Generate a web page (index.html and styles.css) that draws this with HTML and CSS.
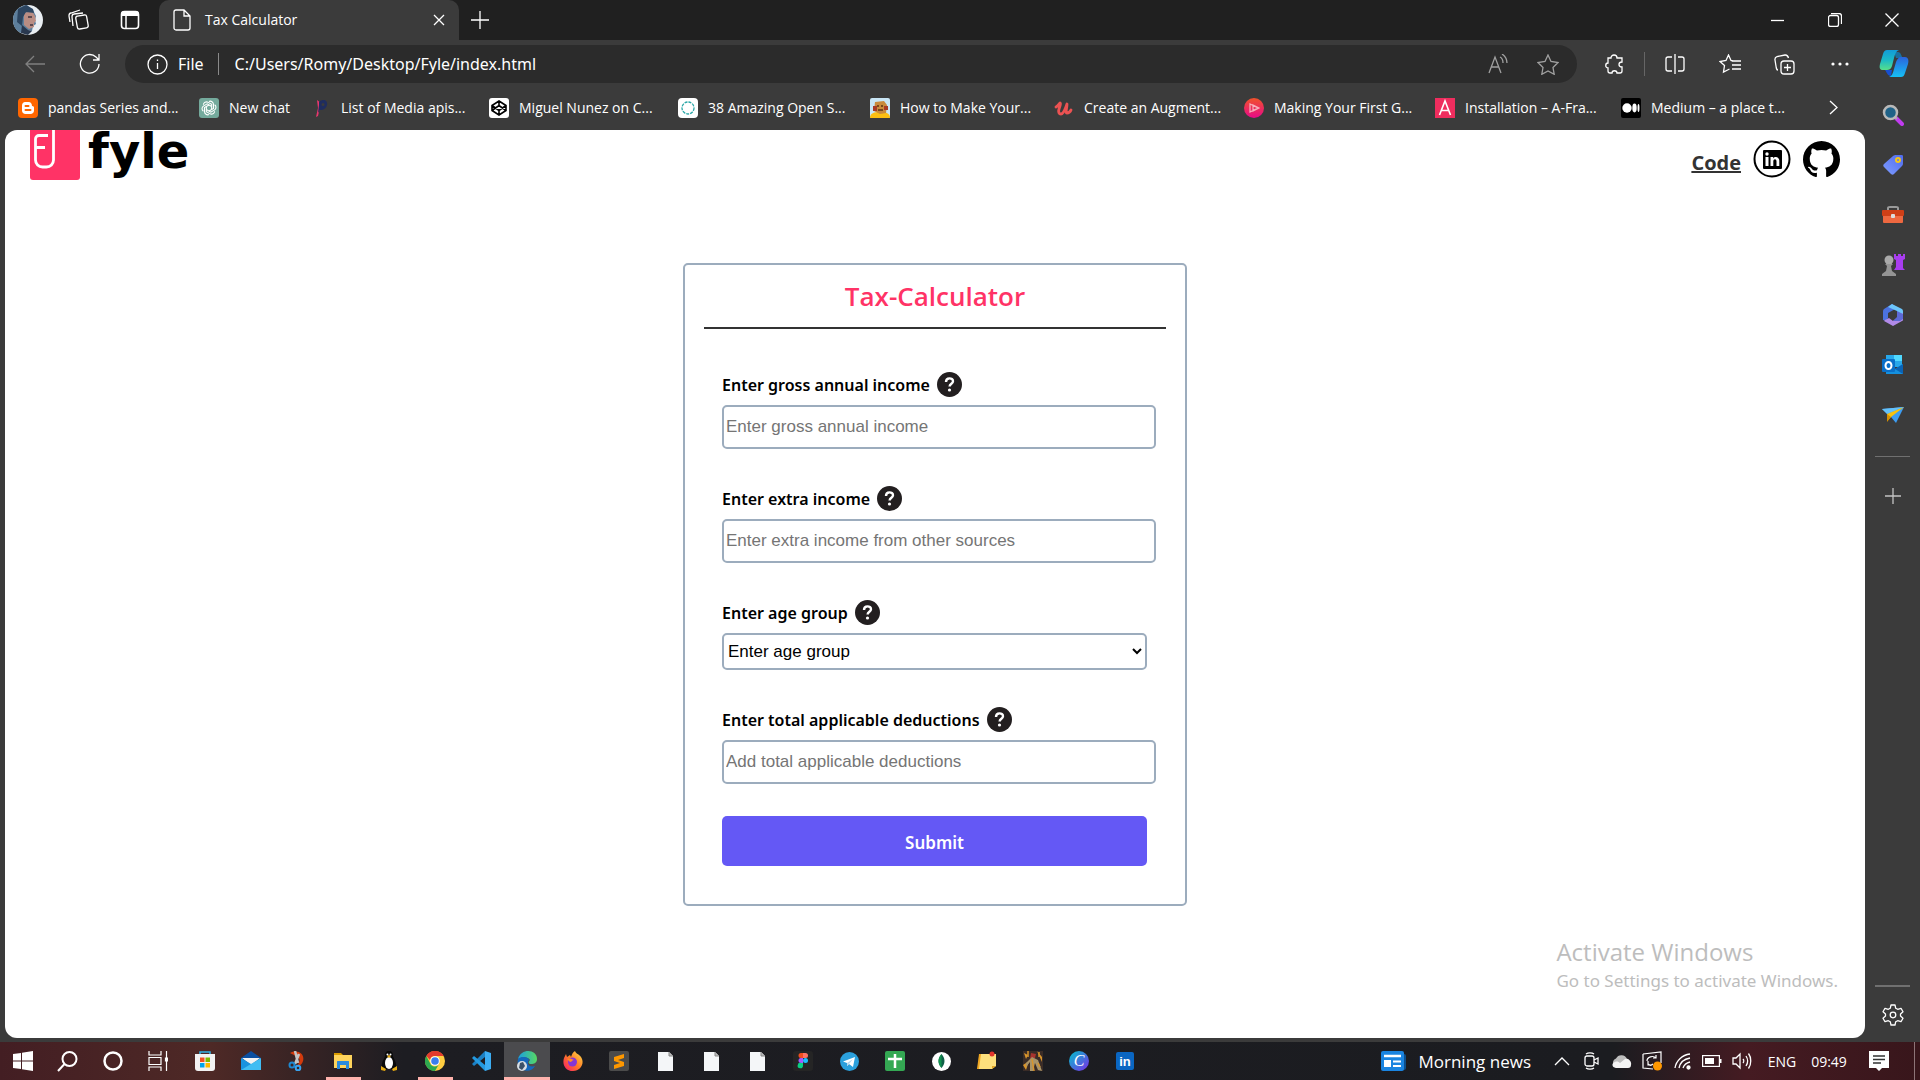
FILE: index.html
```html
<!DOCTYPE html>
<html lang="en">
<head>
<meta charset="utf-8">
<title>Tax Calculator</title>
<link rel="stylesheet" href="styles.css">
</head>
<body>
<header class="tabbar">
  <div class="tabbar-tools">
    <button class="tool" aria-label="Profile"><svg width="30" height="30" viewBox="0 0 30 30"><circle cx="15" cy="15" r="15" fill="#e9eef2"/><path d="M14 0C5 1 0 7 0 15c0 6 3 11 8 13l5-3 6 1 1-5 3-2-1-4 1-4-3-6z" fill="#5d7f9c"/><path d="M11 8l8-2 3 5 1 5-2 2v4l-5 2-5-4z" fill="#b98d83"/><path d="M5 4l8-4 7 4 1 4-8-1-3 5-1 9-5-4z" fill="#2c4560"/><path d="M9 20l6 5 4 1-4 4-7-2z" fill="#29384f"/><path d="M15 12h4M17 20h3" stroke="#3f3440" stroke-width="1.5"/></svg></button>
    <button class="tool" aria-label="Workspaces"><svg class="line" width="22" height="22" viewBox="0 0 22 22"><rect x="8.500" y="6.500" width="11" height="13" rx="2" transform="rotate(-10 14 13)"/><path d="M5 17l-1-9c0-2 1-3 2-3l9-1M2 13l-1-6c0-2 1-3 2-3l9-3"/></svg></button>
    <button class="tool" aria-label="Tab actions"><svg width="20" height="20" viewBox="0 0 20 20"><rect x="1.500" y="1.500" width="17" height="17" rx="3" fill="none" stroke="#fff" stroke-width="1.600"/><path d="M1 6V4a3 3 0 013-3h12a3 3 0 013 3v2z" fill="#fff"/><path d="M6 6v12" stroke="#fff" stroke-width="1.500"/></svg></button>
  </div>
  <div class="tab">
    <svg class="line" width="18" height="22" viewBox="0 0 18 22"><path d="M3 1h8l6 6v12a2 2 0 01-2 2H3a2 2 0 01-2-2V3a2 2 0 012-2zM11 1v6h6"/></svg>
    <span class="tab-title">Tax Calculator</span>
    <button class="tab-close" aria-label="Close tab"><svg class="line" width="12" height="12" viewBox="0 0 12 12"><path d="M1 1l10 10M11 1L1 11"/></svg></button>
  </div>
  <button class="new-tab" aria-label="New tab"><svg class="line" width="18" height="18" viewBox="0 0 18 18"><path d="M9 0v18M0 9h18"/></svg></button>
  <div class="window-buttons">
    <button aria-label="Minimize"><svg class="line" width="13" height="13" viewBox="0 0 13 13"><path d="M0 6.500h13"/></svg></button>
    <button aria-label="Restore"><svg class="line" width="14" height="14" viewBox="0 0 14 14"><rect x=".5" y="2.500" width="10" height="11" rx="2"/><path d="M3 .5h8a2.500 2.500 0 012.500 2.500v8"/></svg></button>
    <button aria-label="Close"><svg class="line" width="14" height="14" viewBox="0 0 14 14"><path d="M.5.5l13 13M13.500.5l-13 13"/></svg></button>
  </div>
</header>

<nav class="toolbar">
  <button class="nav-button" aria-label="Back"><svg class="line dim" width="20" height="18" viewBox="0 0 20 18"><path d="M20 9H1M9 1L1 9l8 8"/></svg></button>
  <button class="nav-button" aria-label="Refresh"><svg class="line" width="22" height="22" viewBox="0 0 22 22"><path d="M20 11a9.300 9.300 0 11-3-7l3 3M20 1v6h-6"/></svg></button>
  <div class="address">
    <svg class="line" width="21" height="21" viewBox="0 0 21 21"><circle cx="10.500" cy="10.500" r="9.500"/><path d="M10.500 9v6M10.500 5.500v1.500"/></svg>
    <span class="scheme">File</span>
    <input class="url" type="text" aria-label="Address" value="C:/Users/Romy/Desktop/Fyle/index.html">
    <button class="address-button" aria-label="Read aloud"><svg class="line dim2" width="20" height="20" viewBox="0 0 20 20"><path d="M1 19L7 3l6 16M3 13h8M12 3c2 1 3 3 3 6M14 0c3 2 5 5 5 9"/></svg></button>
    <button class="address-button" aria-label="Add to favorites"><svg class="line dim2" width="22" height="21" viewBox="0 0 22 21"><path d="M11 1l3 6.500 7 1-5 5 1.200 6.800L11 17l-6.200 3.300L6 13.500l-5-5 7-1z"/></svg></button>
  </div>
  <div class="toolbar-end">
    <button class="nav-button" aria-label="Extensions"><svg class="line" width="20" height="20" viewBox="0 0 20 20"><path d="M3 4h3c0-4 6-4 6 0h5v4c-4 0-4 5 0 5v4c0 1-1 2-2 2H12c0-3-5-3-5 0H5c-1 0-2-1-2-2v-3c-3 0-3-5 0-5z"/></svg></button>
    <span class="separator"></span>
    <button class="nav-button" aria-label="Split screen"><svg class="line" width="20" height="20" viewBox="0 0 20 20"><path d="M10 0v20M7 3H3a2 2 0 00-2 2v10a2 2 0 002 2h4M13 3h4a2 2 0 012 2v10a2 2 0 01-2 2h-4"/></svg></button>
    <button class="nav-button" aria-label="Favorites"><svg class="line" width="22" height="20" viewBox="0 0 22 20"><path d="M14 7l-2-.5L9.500 1 7 6.500l-6 1 4.500 4L4.500 18l6-3M13 11h9M13 7h9M13 15h9"/></svg></button>
    <button class="nav-button" aria-label="Collections"><svg class="line" width="21" height="21" viewBox="0 0 21 21"><rect x="7" y="7" width="13" height="13" rx="3"/><path d="M13.500 10v7M10 13.500h7M4 16c-1 0-1.500-1-1.700-2L1 6c-.3-2 .5-3 2-3.400L11 1c2-.2 3 .8 3.500 3"/></svg></button>
    <button class="nav-button" aria-label="Settings and more"><svg width="18" height="4" viewBox="0 0 18 4" fill="#fff"><circle cx="2" cy="2" r="1.600"/><circle cx="9" cy="2" r="1.600"/><circle cx="16" cy="2" r="1.600"/></svg></button>
    <button class="copilot" aria-label="Copilot"><svg width="30" height="28" viewBox="0 0 30 28"><defs><linearGradient id="cp1" x1="0" y1="0" x2="0" y2="1"><stop offset="0" stop-color="#129bd8"/><stop offset=".5" stop-color="#1bb9c6"/><stop offset="1" stop-color="#57e08a"/></linearGradient><linearGradient id="cp2" x1="0" y1="0" x2="0" y2="1"><stop offset="0" stop-color="#2b63dc"/><stop offset="1" stop-color="#16c0f5"/></linearGradient></defs><path d="M15 2h4c3 0 3 4 5 6h-7z" fill="#1a6f9f"/><path d="M6 20h7l-1 6c-3 0-4-3-6-6z" fill="#174fd0"/><path d="M8 0h12c-3 1-4 4-5 8l-2 8c-1 3-3 4-5 4H4c-3 0-4-2-3-6L4 4c1-3 2-4 4-4z" fill="url(#cp1)"/><path d="M22 27H10c3-1 4-4 5-8l2-7c1-3 3-5 5-5h4c3 0 4 3 3 7l-3 9c-1 3-2 4-4 4z" fill="url(#cp2)"/></svg></button>
  </div>
</nav>

<div class="browser">
  <div class="content">
    <nav class="bookmarks">
      <a href="#"><svg width="20" height="20" viewBox="0 0 20 20"><rect width="20" height="20" rx="4" fill="#f60"/><path d="M7 4h3.500C13 4 14 6 14 8c2 0 2 1 2 2v2.500c0 2-1.500 3.500-3.500 3.500h-5C5.500 16 4 14.500 4 12.500v-5C4 5.500 5.500 4 7 4z" fill="#fff"/><path d="M7.500 8h3M7.500 12h5" stroke="#f60" stroke-width="2" stroke-linecap="round"/></svg><span>pandas Series and...</span></a>
      <a href="#"><svg width="20" height="20" viewBox="0 0 20 20"><rect width="20" height="20" rx="3" fill="#74aa9c"/><g fill="none" stroke="#fff" stroke-width="1.100"><g id="petal"><path d="M10 3.500c2-1 4.500.5 4.500 3v4L10 13"/></g><use href="#petal" transform="rotate(60 10 10)"/><use href="#petal" transform="rotate(120 10 10)"/><use href="#petal" transform="rotate(180 10 10)"/><use href="#petal" transform="rotate(240 10 10)"/><use href="#petal" transform="rotate(300 10 10)"/></g></svg><span>New chat</span></a>
      <a href="#"><svg width="20" height="20" viewBox="0 0 20 20"><path d="M6 2l4 3-3 13-2 1 2-9z" fill="#e8376d"/><path d="M8 4c5-4 9-1 8 3s-4 5-7 5l-2 3 1-8z" fill="#1f2d5f"/><circle cx="12" cy="6.500" r="1.500" fill="#3b3b3b"/></svg><span>List of Media apis...</span></a>
      <a href="#"><svg width="20" height="20" viewBox="0 0 20 20"><rect width="20" height="20" rx="3" fill="#fff"/><path d="M10 3l7 4.500v5L10 17l-7-4.500v-5zM10 3v4.500M10 12.500V17M3 7.500l7 5 7-5M3 12.500l7-5 7 5" fill="none" stroke="#000" stroke-width="1.600"/></svg><span>Miguel Nunez on C...</span></a>
      <a href="#"><svg width="20" height="20" viewBox="0 0 20 20"><rect width="20" height="20" rx="4" fill="#fff"/><circle cx="10" cy="10" r="6" fill="none" stroke="#2ba8a8" stroke-width="1.300" stroke-dasharray="3 1"/></svg><span>38 Amazing Open S...</span></a>
      <a href="#"><svg width="20" height="20" viewBox="0 0 20 20"><rect width="20" height="20" rx="2" fill="#c9e6f5"/><path d="M0 20c0-5 4-6 10-6s10 1 10 6z" fill="#fcbf12"/><path d="M5 4l9-1 3 4-1 8-6 1-6-3z" fill="#c98a3c"/><path d="M3 8h4v5H3zM14 8h4v4h-4z" fill="#a83a25"/><path d="M7 8h2M11 8h2M8 12h5" stroke="#5c3515" stroke-width="1.500"/></svg><span>How to Make Your...</span></a>
      <a href="#"><svg width="20" height="20" viewBox="0 0 20 20"><path d="M2 9c2-1 3-3 4-4 1 0 0 3-1 6s0 5 2 5 4-4 6-10c0 4-2 9 0 9 1 0 3-1 4-3" fill="none" stroke="#ec5252" stroke-width="2.800" stroke-linecap="round" stroke-linejoin="round"/></svg><span>Create an Augment...</span></a>
      <a href="#"><svg width="20" height="20" viewBox="0 0 20 20"><defs><linearGradient id="ps" x1="0" y1="0" x2="0" y2="1"><stop offset="0" stop-color="#f0522a"/><stop offset="1" stop-color="#e80a89"/></linearGradient></defs><circle cx="10" cy="10" r="10" fill="url(#ps)"/><path d="M6 6v8l8-4zM9 7v6l6-3z" fill="none" stroke="#f7b0bb" stroke-width="1.200"/></svg><span>Making Your First G...</span></a>
      <a href="#"><svg width="20" height="20" viewBox="0 0 20 20"><rect width="20" height="20" fill="#ef2d5e"/><path d="M4.500 17L10 3l5.500 14M6.500 12.500h7" fill="none" stroke="#fff" stroke-width="1.600"/></svg><span>Installation – A-Fra...</span></a>
      <a href="#"><svg width="20" height="20" viewBox="0 0 20 20"><rect width="20" height="20" rx="2" fill="#000"/><circle cx="6" cy="10" r="4.700" fill="#fff"/><ellipse cx="13.500" cy="10" rx="2.200" ry="4.400" fill="#fff"/><ellipse cx="17.500" cy="10" rx="1" ry="4" fill="#fff"/></svg><span>Medium – a place t...</span></a>
      <button class="more-bookmarks" aria-label="More bookmarks"><svg class="line" width="9" height="15" viewBox="0 0 9 15"><path d="M1 1l7 6.500L1 14"/></svg></button>
    </nav>

    <div class="page">
      <header class="site-header">
        <a class="brand" href="#">
          <svg width="50" height="50" viewBox="0 0 50 50"><path d="M0 0h50v47a3 3 0 01-3 3H3a3 3 0 01-3-3z" fill="#ff3366"/><path d="M18 5.500H9a3.500 3.500 0 00-3.500 3.500v21a7 7 0 007 7h4a7 7 0 007-7V0M6 17.500h9" fill="none" stroke="#fff" stroke-width="2.800"/></svg>
          <span class="wordmark">fyle</span>
        </a>
        <div class="links">
          <a class="code-link" href="#">Code</a>
          <a href="#" aria-label="LinkedIn"><svg width="38" height="38" viewBox="0 0 38 38"><circle cx="19" cy="19" r="17.500" fill="#fff" stroke="#000" stroke-width="2"/><rect x="10" y="10" width="19" height="19" rx="1" fill="#000"/><g fill="#fff"><rect x="12.500" y="17" width="3" height="9"/><circle cx="14" cy="14" r="1.700"/><path d="M17.500 17h2.700v1.400c1.400-2.400 6.100-2 6.100 2.400V26h-2.800v-4.500c0-3-3.200-2.700-3.200 0V26h-2.800z"/></g></svg></a>
          <a href="#" aria-label="GitHub"><svg width="37" height="37" viewBox="0 0 16 16"><path d="M8 0C3.580 0 0 3.580 0 8c0 3.540 2.290 6.530 5.470 7.590.4.070.55-.17.55-.38 0-.19-.01-.82-.01-1.490-2.010.37-2.530-.49-2.690-.94-.09-.23-.48-.94-.82-1.130-.28-.15-.68-.52-.01-.53.63-.01 1.080.58 1.230.82.72 1.210 1.870.87 2.330.66.07-.52.28-.87.51-1.070-1.780-.2-3.640-.89-3.640-3.950 0-.87.31-1.590.82-2.150-.08-.2-.36-1.020.08-2.120 0 0 .67-.21 2.200.82.64-.18 1.320-.27 2-.27s1.360.09 2 .27c1.530-1.040 2.200-.82 2.200-.82.44 1.100.16 1.920.08 2.120.51.56.82 1.270.82 2.150 0 3.070-1.870 3.750-3.650 3.950.29.25.54.73.54 1.480 0 1.070-.01 1.930-.01 2.200 0 .21.15.46.55.38A8.010 8.010 0 0016 8c0-4.420-3.580-8-8-8z"/></svg></a>
        </div>
      </header>

      <main class="card">
        <h1 class="card-title">Tax-Calculator</h1>
        <form class="form">
          <div class="field">
            <div class="label-row"><label for="gross">Enter gross annual income</label><button class="help" type="button" aria-label="Help"><svg width="25" height="25" viewBox="0 0 25 25"><circle cx="12.500" cy="12.500" r="12.500" fill="#231f20"/><path d="M9 10c0-5 7-4.500 7-.8 0 2.600-3.400 2.500-3.400 5.300" fill="none" stroke="#fff" stroke-width="2.400"/><circle cx="12.500" cy="18" r="1.600" fill="#fff"/></svg></button></div>
            <input class="text-input" id="gross" type="text" placeholder="Enter gross annual income">
          </div>
          <div class="field">
            <div class="label-row"><label for="extra">Enter extra income</label><button class="help" type="button" aria-label="Help"><svg width="25" height="25" viewBox="0 0 25 25"><circle cx="12.500" cy="12.500" r="12.500" fill="#231f20"/><path d="M9 10c0-5 7-4.500 7-.8 0 2.600-3.400 2.500-3.400 5.300" fill="none" stroke="#fff" stroke-width="2.400"/><circle cx="12.500" cy="18" r="1.600" fill="#fff"/></svg></button></div>
            <input class="text-input" id="extra" type="text" placeholder="Enter extra income from other sources">
          </div>
          <div class="field">
            <div class="label-row"><label for="age">Enter age group</label><button class="help" type="button" aria-label="Help"><svg width="25" height="25" viewBox="0 0 25 25"><circle cx="12.500" cy="12.500" r="12.500" fill="#231f20"/><path d="M9 10c0-5 7-4.500 7-.8 0 2.600-3.400 2.500-3.400 5.300" fill="none" stroke="#fff" stroke-width="2.400"/><circle cx="12.500" cy="18" r="1.600" fill="#fff"/></svg></button></div>
            <select class="select" id="age"><option>Enter age group</option></select>
          </div>
          <div class="field">
            <div class="label-row"><label for="deductions">Enter total applicable deductions</label><button class="help" type="button" aria-label="Help"><svg width="25" height="25" viewBox="0 0 25 25"><circle cx="12.500" cy="12.500" r="12.500" fill="#231f20"/><path d="M9 10c0-5 7-4.500 7-.8 0 2.600-3.400 2.500-3.400 5.300" fill="none" stroke="#fff" stroke-width="2.400"/><circle cx="12.500" cy="18" r="1.600" fill="#fff"/></svg></button></div>
            <input class="text-input" id="deductions" type="text" placeholder="Add total applicable deductions">
          </div>
          <button class="submit" type="submit">Submit</button>
        </form>
      </main>

      <div class="watermark">
        <p class="watermark-title">Activate Windows</p>
        <p class="watermark-text">Go to Settings to activate Windows.</p>
      </div>
    </div>
  </div>

  <aside class="sidebar">
    <button aria-label="Search"><svg width="22" height="22" viewBox="0 0 22 22"><path d="M14 14l6 6" stroke="#c13cf0" stroke-width="4" stroke-linecap="round"/><path d="M12 12l3 3" stroke="#aaa" stroke-width="2"/><circle cx="8.500" cy="8.500" r="6.500" fill="#1f6288" stroke="#b9b9b9" stroke-width="2.500"/></svg></button>
    <button aria-label="Shopping"><svg width="22" height="22" viewBox="0 0 22 22"><defs><linearGradient id="tg" x1="1" y1="0" x2="0" y2="1"><stop offset="0" stop-color="#4f6bed"/><stop offset="1" stop-color="#7f9dff"/></linearGradient></defs><path d="M11 2c1-1 2-1 3-1h6c1 0 1 1 1 2v6c0 1 0 2-1 3l-8 8c-1 1-2 1-3 0l-7-7c-1-1-1-2 0-3z" fill="url(#tg)"/><circle cx="16" cy="6" r="2" fill="none" stroke="#f5c518" stroke-width="2"/></svg></button>
    <button aria-label="Tools"><svg width="24" height="20" viewBox="0 0 24 20"><path d="M7 5V3c0-1 1-1 2-1h6c1 0 2 0 2 1v2" fill="none" stroke="#9a9a9a" stroke-width="2"/><rect x="2" y="7" width="20" height="11" rx="1" fill="#ee6840"/><rect x="1" y="5" width="22" height="6" rx="1" fill="#cf3f17"/><rect x="10" y="9" width="4" height="4" rx="1" fill="#ddd"/></svg></button>
    <button aria-label="Games"><svg width="24" height="24" viewBox="0 0 24 24"><path d="M13 1h2v2h2V1h3v2h2V1h2v5l-2 1v8l2 2H13l2-3V7l-2-1z" fill="#a93df0"/><circle cx="8" cy="7" r="4.500" fill="#aaa"/><path d="M4 11h8l-2 2 1 5 4 3v2H1v-2l4-3 1-5z" fill="#949494"/></svg></button>
    <button aria-label="Microsoft 365"><svg width="22" height="22" viewBox="0 0 22 22"><path d="M10 0L2 5C1 6 1 7 1 8v8c2 1 4 0 5-2V9l9-5z" fill="#4b72df"/><path d="M10 0l10 5c1 1 1 2 1 3v6l-6-3V7L6 3z" fill="#6cc5fa"/><path d="M21 9v6c0 1 0 2-1 2l-9 5-9-5 1-1 4-2 4 3z" fill="#b18ae8"/><path d="M15 7l6 3v5l-3 2-7 0 4-4z" fill="#5d69d6"/></svg></button>
    <button aria-label="Outlook"><svg width="22" height="22" viewBox="0 0 22 22"><rect x="4" y="1" width="16" height="12" fill="#28a8ea"/><path d="M12 1h8v6h-8z" fill="#50d9ff"/><path d="M4 10l9 5 8-5v10H4z" fill="#1490df"/><path d="M21 10v10l-8-5z" fill="#0a63b5"/><rect y="5" width="13" height="13" rx="1" fill="#0a6fc8"/><ellipse cx="6.500" cy="11.500" rx="3" ry="3.500" fill="none" stroke="#fff" stroke-width="2"/></svg></button>
    <button aria-label="Drop"><svg width="24" height="18" viewBox="0 0 24 18"><path d="M1 3l22-2-8 16-5-6z" fill="#3d9df2"/><path d="M23 1L6 8l-5-5z" fill="#64c1fa"/><path d="M23 1L6 8v7l4-4z" fill="#f8c20e"/><path d="M10 11l-4 5V8z" fill="#d48e00"/></svg></button>
    <span class="side-rule"></span>
    <button aria-label="Customize"><svg class="line dim3" width="16" height="16" viewBox="0 0 16 16"><path d="M8 0v16M0 8h16"/></svg></button>
    <span class="side-rule side-rule-end"></span>
    <button aria-label="Settings"><svg class="line" width="22" height="22" viewBox="0 0 22 22"><circle cx="11" cy="11" r="2.800"/><path d="M9 1h4l.7 3.200 2 1.100L19 4.300l2 3.500L18.500 10v2L21 14.200l-2 3.500-3.300-1-2 1.100L13 21H9l-.7-3.200-2-1.100-3.300 1-2-3.500L3.500 12v-2L1 7.800l2-3.500 3.300 1 2-1.100z" stroke-linejoin="round"/></svg></button>
  </aside>
</div>

<footer class="taskbar">
  <div class="system">
    <button aria-label="Start"><svg width="20" height="20" viewBox="0 0 20 20" fill="#fff"><path d="M0 3l8-1v7.500H0zM9 1.800L20 0v9.500H9zM0 10.500h8V18l-8-1zM9 10.500h11V20L9 18.200z"/></svg></button>
    <button aria-label="Search"><svg width="21" height="21" viewBox="0 0 21 21" fill="none" stroke="#fff" stroke-width="2"><circle cx="12.500" cy="8" r="7"/><path d="M7.500 13L1 20"/></svg></button>
    <button aria-label="Cortana"><svg width="20" height="20" viewBox="0 0 20 20"><circle cx="10" cy="10" r="8.500" fill="none" stroke="#fff" stroke-width="2.500"/></svg></button>
    <button aria-label="Task view"><svg width="20" height="20" viewBox="0 0 20 20" fill="none" stroke="#fff" stroke-width="1.200"><path d="M1 0v4h12V0M1 20v-4h12v4M1 6.500h12v7H1zM18.500 0v20"/><path d="M17.500 7h2v3h-2z" fill="#fff"/></svg></button>
  </div>
  <div class="apps">
    <button aria-label="Store"><svg width="20" height="20" viewBox="0 0 20 20"><path d="M5 4V1h10v3" fill="none" stroke="#31b2e8" stroke-width="1.500"/><path d="M0 3h20v14c0 2-1 3-3 3H3c-2 0-3-1-3-3z" fill="#f2f2f2"/><path d="M5 6.500h4.500V11H5z" fill="#f25022"/><path d="M10.500 6.500H15V11h-4.500z" fill="#7fba00"/><path d="M5 12h4.500v4.500H5z" fill="#00a4ef"/><path d="M10.500 12H15v4.500h-4.500z" fill="#ffb900"/></svg></button>
    <button aria-label="Mail"><svg width="20" height="20" viewBox="0 0 20 20"><path d="M0 7l10-7 10 7v3H0z" fill="#0b4fa0"/><path d="M1 7h18l-9 7z" fill="#f3f3f3"/><path d="M0 7l20 12H0z" fill="#1a93e0"/><path d="M20 7v12H0z" fill="#41bdf3"/></svg></button>
    <button aria-label="Snip"><svg width="20" height="20" viewBox="0 0 20 20"><path d="M3 2c8-4 15 1 13 8-1 4-4 5-6 5 3-4 4-8-1-10z" fill="#d33a0c"/><path d="M8 0l3 12M12 3L8 13" stroke="#c4c4c4" stroke-width="2.500"/><circle cx="5" cy="14" r="2.500" fill="none" stroke="#1e88d0" stroke-width="2"/><circle cx="11" cy="17" r="2.300" fill="none" stroke="#39a2ee" stroke-width="2"/></svg></button>
    <button class="running" aria-label="File Explorer"><svg width="20" height="20" viewBox="0 0 20 20"><path d="M1 2h7l2 2v3H1z" fill="#d99b00"/><path d="M1 4h18v13H1z" fill="#ffd45c"/><path d="M4 18v-7c0-1 0-1 1-1h10c1 0 1 0 1 1v7h-3v-4H7v4z" fill="#2b8bdc"/></svg></button>
    <button aria-label="Linux"><svg width="18" height="20" viewBox="0 0 18 20"><path d="M9 0c3 0 4 2 4 5 0 2 4 6 3 11l-2 2H4l-2-2C1 11 5 7 5 5c0-3 1-5 4-5z" fill="#0a0a0a"/><ellipse cx="9" cy="12" rx="4" ry="6" fill="#fff"/><path d="M7 5l2-1 2 1-2 2zM1 15l5 3-1 2-4-1zM17 15l-5 3 1 2 4-1z" fill="#e7ac12"/><circle cx="7.500" cy="3.500" r="1" fill="#fff"/><circle cx="10.500" cy="3.500" r="1" fill="#fff"/></svg></button>
    <button class="running" aria-label="Chrome"><svg width="20" height="20" viewBox="0 0 20 20"><circle cx="10" cy="10" r="10" fill="#ffcd40"/><path d="M1.300 5A10 10 0 0118.700 5H10a5 5 0 00-5 4z" fill="#e33b2e"/><path d="M1.300 5A10 10 0 0010 20l4.300-7.500A5 5 0 015 12z" fill="#2da94f"/><circle cx="10" cy="10" r="4.800" fill="#fff"/><circle cx="10" cy="10" r="3.800" fill="#3b7ded"/></svg></button>
    <button aria-label="VS Code"><svg width="20" height="20" viewBox="0 0 20 20"><path d="M14 0l6 2v16l-6 2z" fill="#3cadf3"/><path d="M14 0v6L3 15l-2-2z" fill="#1b80c4"/><path d="M14 20v-6L3 5 1 7z" fill="#2399e0"/></svg></button>
    <button class="running active" aria-label="Edge"><svg width="21" height="20" viewBox="0 0 21 20"><defs><linearGradient id="eg"><stop offset="0" stop-color="#1a9fe0"/><stop offset="1" stop-color="#57d862"/></linearGradient></defs><path d="M1 8C4-3 20-2 20 8c0 4-3 5-6 5s-3-2-1-4c-1-3-8-4-12-1z" fill="url(#eg)"/><path d="M1 8c5-4 11-1 11 1-3 3 0 8 6 6-2 4-7 6-12 4S0 12 1 8z" fill="#1468bd"/><circle cx="5" cy="15" r="5" fill="#d7dde3"/><path d="M3 12l3-1 2 4-3 4-3-2z" fill="#3c5168"/></svg></button>
    <button aria-label="Firefox"><svg width="20" height="20" viewBox="0 0 20 20"><defs><linearGradient id="fx" x1="1" y1="0" x2="0" y2="1"><stop offset="0" stop-color="#ffe24b"/><stop offset=".5" stop-color="#ff7a26"/><stop offset="1" stop-color="#f5156c"/></linearGradient></defs><path d="M12 0c1 3 4 3 6 6 4 6 0 14-8 14S-1 13 1 7l2-4 1 3 3-2 1 2c1-3 2-5 4-6z" fill="url(#fx)"/><circle cx="9.500" cy="11" r="4.500" fill="#8436d6"/><path d="M4 8c3-1 5 0 7 1-2 0-2 2-4 2z" fill="#ff8a2a"/></svg></button>
    <button aria-label="Sublime Text"><svg width="20" height="20" viewBox="0 0 20 20"><rect width="20" height="20" rx="2" fill="#4b4b4b"/><path d="M15 3v4l-6 2 6 2v4l-10 3v-4l6-2-6-2V6z" fill="#ff9800"/></svg></button>
    <button aria-label="Document"><svg width="15" height="19" viewBox="0 0 15 19"><path d="M0 0h11l4 4v15H0z" fill="#f4f6f8"/><path d="M11 0v4h4" fill="#bcbcbc" stroke="#888"/></svg></button>
    <button aria-label="Document"><svg width="15" height="19" viewBox="0 0 15 19"><path d="M0 0h11l4 4v15H0z" fill="#f4f6f8"/><path d="M11 0v4h4" fill="#bcbcbc" stroke="#888"/></svg></button>
    <button aria-label="Document"><svg width="15" height="19" viewBox="0 0 15 19"><path d="M0 0h11l4 4v15H0z" fill="#f4f6f8"/><path d="M11 0v4h4" fill="#bcbcbc" stroke="#888"/></svg></button>
    <button aria-label="Figma"><svg width="20" height="20" viewBox="0 0 20 20"><rect width="20" height="20" rx="3" fill="#252525"/><path d="M10 2H8a2.500 2.500 0 000 5h2z" fill="#f24e1e"/><path d="M10 2h2.500a2.500 2.500 0 010 5H10z" fill="#ff7262"/><path d="M10 7H8a2.500 2.500 0 000 5h2z" fill="#a259ff"/><circle cx="12.500" cy="9.500" r="2.500" fill="#1abcfe"/><path d="M10 12H8a2.700 2.700 0 102 2.500z" fill="#0acf83"/></svg></button>
    <button aria-label="Telegram"><svg width="19" height="19" viewBox="0 0 19 19"><circle cx="9.500" cy="9.500" r="9.500" fill="#2ba0dc"/><path d="M3 9.500L15 5l-2 10-4-3-2 2v-3z" fill="#fff"/><path d="M7 11l6-4-4 5-2 2z" fill="#b9d8ee"/></svg></button>
    <button aria-label="Sheets"><svg width="20" height="20" viewBox="0 0 20 20"><rect width="20" height="20" rx="2" fill="#34a853"/><path d="M10 3v14M3 8h14" stroke="#fff" stroke-width="2.500"/></svg></button>
    <button aria-label="MongoDB"><svg width="19" height="19" viewBox="0 0 19 19"><circle cx="9.500" cy="9.500" r="9.500" fill="#fff"/><path d="M9.500 2c4 5 4 9 0 14-4-5-4-9 0-14z" fill="#116149"/><path d="M9.500 2v14c-4-5-4-9 0-14z" fill="#12924f"/></svg></button>
    <button aria-label="Sticky Notes"><svg width="20" height="20" viewBox="0 0 20 20"><path d="M2 3h6v15H0z" fill="#f0a722"/><path d="M4 3h15v12l-4 3H2z" fill="#fde07d"/><path d="M19 15l-4 3v-3z" fill="#e2a725"/><circle cx="15" cy="3" r="2.500" fill="#e1352c"/></svg></button>
    <button aria-label="Game"><svg width="20" height="20" viewBox="0 0 20 20"><path d="M0 0h20v20H0z" fill="#3a2c27"/><path d="M1 2l4 2-2 4zM14 0l5 6v5zM0 14l6-4-3 9z" fill="#d8952c"/><path d="M8 2l5 1-1 4-5 1z" fill="#a8342e"/><path d="M3 12l6-6 6 3 4 11-4-1-3-7-2 8H7V11l-4 5z" fill="#a99468"/><path d="M9 8l2 12M15 12l2 4M5 0v6M16 1v5" stroke="#d8952c" stroke-width="1.500"/></svg></button>
    <button aria-label="Canva"><svg width="20" height="20" viewBox="0 0 20 20"><defs><linearGradient id="cv" x1="0" y1="0" x2="1" y2="1"><stop offset="0" stop-color="#00c4cc"/><stop offset="1" stop-color="#7d2ae8"/></linearGradient></defs><circle cx="10" cy="10" r="10" fill="url(#cv)"/><text x="10" y="15" text-anchor="middle" font-family="Liberation Serif, serif" font-style="italic" font-size="16" fill="#fff">C</text></svg></button>
    <button aria-label="LinkedIn"><svg width="18" height="18" viewBox="0 0 18 18"><rect width="18" height="18" rx="2" fill="#0a66c2"/><text x="9" y="14" text-anchor="middle" font-family="Liberation Sans, sans-serif" font-weight="700" font-size="13" fill="#fff">in</text></svg></button>
  </div>
  <div class="tray">
    <button class="news"><svg width="25" height="20" viewBox="0 0 25 20"><rect x="5" y="3" width="20" height="16" rx="2" fill="#0d4f8c"/><rect width="23" height="20" rx="2" fill="#1a84e0"/><path d="M3 5h17" stroke="#fff" stroke-width="2.500"/><path d="M3 9h7v7H3z" fill="#fff"/><path d="M12 10.500h8M12 15h8" stroke="#fff" stroke-width="2"/></svg><span>Morning news</span></button>
    <button class="tray-icon" aria-label="Show hidden icons"><svg class="line" width="16" height="9" viewBox="0 0 16 9"><path d="M1 8l7-7 7 7"/></svg></button>
    <button class="tray-icon" aria-label="Meet now"><svg class="line" width="16" height="18" viewBox="0 0 16 18"><rect x="1" y="4" width="9" height="10" rx="2"/><path d="M10 8l4-2v6l-4-2M2 2c2-1.500 6-1.500 8 0M2 16c2 1.500 6 1.500 8 0"/></svg></button>
    <button class="tray-icon" aria-label="OneDrive"><svg width="20" height="13" viewBox="0 0 20 13"><path d="M5 13a5 5 0 01-1-9.500A6 6 0 0115 4z" fill="#bdbdbd"/><path d="M4 13c-4 0-5-5-1-6 2-1 4 0 5 1l5-4c3-1 7 2 6 6 0 2-1 3-3 3z" fill="#f4f4f4"/></svg></button>
    <button class="tray-icon" aria-label="Update"><svg width="20" height="20" viewBox="0 0 20 20" fill="none" stroke="#fff" stroke-width="1.200"><path d="M1 3l18-2v11M1 3v14l10 1M5 10c0-4 6-6 9-3M14 4v3h-3M6 10v4h3M6 13c2 2 4 1 5 0"/><circle cx="15.500" cy="15" r="4.500" fill="#ff9800" stroke="none"/></svg></button>
    <button class="tray-icon" aria-label="Network"><svg class="line" width="17" height="17" viewBox="0 0 17 17"><path d="M1 15C2 8 8 2 16 1M5 15c1-5 5-9 11-10M9 15c1-3 3-5 7-6"/><circle cx="14.500" cy="14.500" r="1.500" fill="#fff"/></svg></button>
    <button class="tray-icon" aria-label="Battery"><svg width="20" height="12" viewBox="0 0 20 12"><rect x=".6" y=".6" width="16.800" height="10.800" fill="none" stroke="#fff" stroke-width="1.200"/><path d="M3 3h9v6H3zM18 4h1.500v4H18z" fill="#fff"/></svg></button>
    <button class="tray-icon" aria-label="Volume"><svg class="line" width="20" height="18" viewBox="0 0 20 18"><path d="M1 6h3l4-4v14l-4-4H1zM11 7c1 1 1 3 0 4M14 4c2 3 2 7 0 10M16.500 1.500c3 4 3 11 0 15"/></svg></button>
    <button class="lang">ENG</button>
    <button class="clock">09:49</button>
    <button class="notice" aria-label="Notifications"><svg width="20" height="20" viewBox="0 0 20 20"><path d="M0 0h20v17h-7l-3 3-3-3H0z" fill="#fff"/><path d="M4 5h12M4 8.500h12M4 12h8" stroke="#333" stroke-width="1.300"/></svg></button>
  </div>
</footer>
</body>
</html>
```
FILE: styles.css
```css
* {
  box-sizing: border-box;
}

body {
  margin: 0;
  min-height: 100vh;
  display: flex;
  flex-direction: column;
  background: #3b3b3b;
  color: #fff;
  font-family: "Open Sans", "Noto Sans", sans-serif;
  font-size: 14px;
}

button {
  display: flex;
  align-items: center;
  justify-content: center;
  padding: 0;
  border: 0;
  background: none;
  color: inherit;
  font: inherit;
}

svg {
  display: block;
  flex: none;
}

a {
  color: inherit;
  text-decoration: none;
}

.line {
  fill: none;
  stroke: #fff;
  stroke-width: 1.300;
}

.dim { stroke: #808080; }
.dim2 { stroke: #a0a0a0; }
.dim3 { stroke: #c4c4c4; }

/* Tab strip */
.tabbar {
  display: flex;
  height: 40px;
  background: #202020;
}

.tabbar-tools {
  display: flex;
  width: 159px;
  padding-left: 2px;
}

.tool {
  width: 51px;
}

.tab {
  display: flex;
  align-items: center;
  width: 300px;
  padding: 0 14px 1px;
  gap: 14px;
  border-radius: 10px 10px 0 0;
  background: #3b3b3b;
}

.tab-title {
  flex: 1;
}

.new-tab {
  width: 42px;
}

.window-buttons {
  display: flex;
  margin-left: auto;
}

.window-buttons button {
  width: 57px;
}

/* Address row */
.toolbar {
  display: flex;
  align-items: center;
  height: 48px;
  padding-left: 7px;
}

.nav-button {
  width: 55px;
  height: 40px;
}

.copilot {
  width: 53px;
  height: 40px;
}

.address {
  display: flex;
  flex: 1;
  align-items: center;
  height: 38px;
  margin: 0 10px 0 8px;
  padding: 0 4px 0 22px;
  border-radius: 19px;
  background: #2b2b2b;
  font-family: "Noto Sans", "Open Sans", sans-serif;
  font-size: 16px;
}

.scheme {
  margin-left: 10px;
  padding-right: 14px;
  border-right: 1px solid #8a8a8a;
}

.url {
  flex: 1;
  padding: 0 16px;
  border: 0;
  background: none;
  color: #fff;
  font: inherit;
}

.address-button {
  width: 50px;
  height: 36px;
}

.toolbar-end {
  display: flex;
  align-items: center;
}

.separator {
  width: 1px;
  height: 24px;
  margin: 0 2px;
  background: #666;
}

/* Main area */
.browser {
  display: flex;
  flex: 1;
}

.content {
  display: flex;
  flex: 1;
  flex-direction: column;
  padding: 0 0 4px 5px;
}

.bookmarks {
  display: grid;
  grid-template-columns: 181px 112px 178px 189px 192px 184px 190px 191px 186px 190px 1fr;
  height: 42px;
  padding: 0 0 3px 13px;
}

.bookmarks a {
  display: flex;
  align-items: center;
  gap: 10px;
  white-space: nowrap;
}

.more-bookmarks {
  justify-content: flex-start;
  padding-left: 18px;
}

.page {
  position: relative;
  flex: 1;
  border-radius: 12px;
  background: #fff;
  color: #000;
}

.site-header {
  display: flex;
  justify-content: space-between;
  padding: 0 25px;
}

.brand {
  display: flex;
  gap: 8px;
  height: 50px;
}

.wordmark {
  font-family: "DejaVu Sans", sans-serif;
  font-size: 48px;
  font-weight: 700;
  line-height: 42px;
}

.links {
  display: flex;
  align-items: center;
  gap: 12px;
  padding-top: 8px;
}

.code-link {
  padding-top: 6px;
  color: #333;
  font-size: 20px;
  font-weight: 700;
  text-decoration: underline;
}

.card {
  width: 504px;
  margin: 83px auto 0;
  padding: 0 19px 38px;
  border: 2px solid #9cacbd;
  border-radius: 5px;
}

.card-title {
  margin: 0;
  padding: 12px 0;
  border-bottom: 2px solid #333;
  color: #ff3366;
  font-size: 26px;
  font-weight: 600;
  line-height: 38px;
  text-align: center;
}

.form {
  padding: 43px 18px 0 18px;
}

.field {
  margin-bottom: 37px;
}

.field:last-of-type {
  margin-bottom: 32px;
}

.label-row {
  display: flex;
  align-items: center;
  gap: 7px;
  height: 25px;
  margin-bottom: 8px;
  font-family: "Noto Sans", "Open Sans", sans-serif;
  font-size: 16px;
  font-weight: 600;
}

.text-input,
.select {
  display: block;
  border: 2px solid #9cacbd;
  border-radius: 5px;
  background: #fff;
  font-family: "Liberation Sans", Arial, sans-serif;
  font-size: 17px;
}

.text-input {
  width: 434px;
  height: 44px;
  padding: 0 2px;
}

.text-input::placeholder {
  color: #757575;
}

.select {
  width: 425px;
  height: 37px;
  color: #000;
}

.submit {
  width: 425px;
  height: 50px;
  padding-top: 2px;
  border-radius: 5px;
  background: #6458f5;
  color: #fff;
  font-family: "Noto Sans", "Open Sans", sans-serif;
  font-size: 17px;
  font-weight: 600;
}

.watermark {
  position: absolute;
  right: 27px;
  bottom: 45px;
  color: #bdbdbd;
}

.watermark p {
  margin: 0;
}

.watermark-title {
  font-size: 24px;
  line-height: 34px;
}

.watermark-text {
  font-family: "Noto Sans", "Open Sans", sans-serif;
  font-size: 17px;
  line-height: 24px;
}

/* Sidebar */
.sidebar {
  display: flex;
  flex-direction: column;
  align-items: center;
  width: 55px;
  padding: 2px 0 2px;
}

.sidebar button {
  width: 50px;
  height: 50px;
}

.side-rule {
  width: 35px;
  height: 1px;
  margin: 16px 0 14px;
  background: #707070;
}

.side-rule-end {
  height: 2px;
  margin: auto 0 3px;
}

/* Taskbar */
.taskbar {
  display: flex;
  height: 38px;
  background: linear-gradient(90deg, #431e23 0, #4e2926 11%, #1d1d22 21%, #1b1c20 84%, #451b22 91%, #38161b 100%);
}

.system,
.apps {
  display: flex;
}

.system {
  margin-right: 2px;
}

.system button {
  width: 45px;
}

.apps button {
  width: 46px;
}

.apps .running {
  background: linear-gradient(#ffb3ad, #ffb3ad) bottom / 35px 3px no-repeat;
}

.apps .active {
  background: linear-gradient(#ffb3ad, #ffb3ad) bottom / 46px 3px no-repeat, #4b4b4e;
}

.tray {
  display: flex;
  margin-left: auto;
  padding-right: 5px;
}

.news {
  gap: 12px;
  margin-right: 16px;
  font-size: 17px;
}

.tray-icon {
  width: 30px;
}

.lang {
  width: 50px;
}

.clock {
  width: 44px;
}

.notice {
  width: 64px;
  padding-right: 8px;
  border-right: 1px solid #8d7477;
}
```
